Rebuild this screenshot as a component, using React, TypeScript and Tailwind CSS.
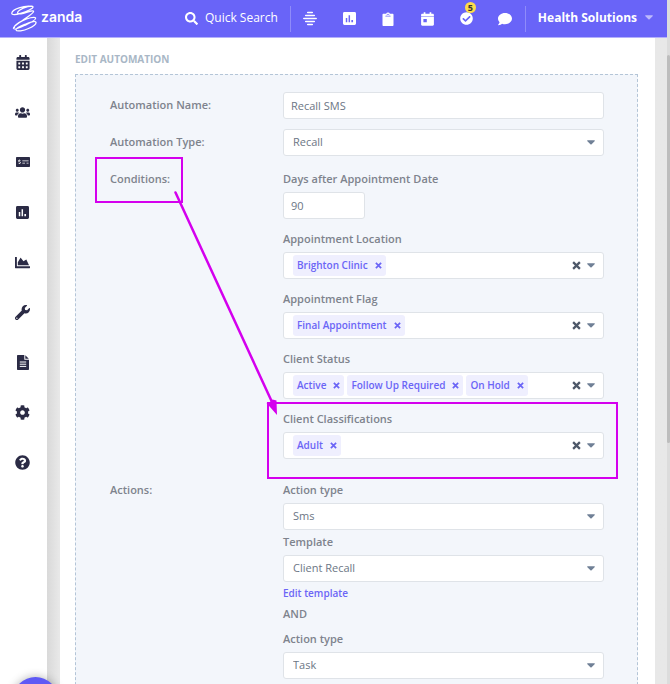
import React from "react";
import {
  FaSearch,
  FaCalendarAlt,
  FaUsers,
  FaMoneyCheckAlt,
  FaChartArea,
  FaWrench,
  FaCog,
  FaQuestionCircle,
  FaCheckCircle,
  FaComment,
} from "react-icons/fa";

function ChartBox({ className }: { className: string }) {
  return (
    <svg viewBox="0 0 14 14" className={className} fill="currentColor" aria-hidden="true">
      <path
        fillRule="evenodd"
        d="M1.5 0h11A1.5 1.5 0 0 1 14 1.5v11a1.5 1.5 0 0 1-1.500 1.500h-11A1.500 1.500 0 0 1 0 12.500v-11A1.500 1.500 0 0 1 1.500 0ZM3 6.500V11h1.600V6.500ZM6 3.500V11h1.600V3.500ZM9 8.500V11h1.800V8.500Z"
      />
    </svg>
  );
}

function LinesIcon() {
  return (
    <svg viewBox="0 0 14 15" className="h-[15px] w-[14px]" stroke="currentColor" strokeWidth="1.500" strokeLinecap="round" aria-hidden="true">
      <path d="M4.700 1.500h4.600M2.700 4.500h8.600M.8 7.500h12.400M2.700 10.500h8.600M4.700 13.500h4.600" />
    </svg>
  );
}

function ClipboardIcon() {
  return (
    <svg viewBox="0 0 12 14" className="h-[14px] w-[12px]" aria-hidden="true">
      <path
        fill="currentColor"
        d="M1.500 1.800h2.600a2 2 0 0 1 3.800 0h2.600c.6 0 1 .4 1 1v10.100c0 .6-.4 1-1 1h-9c-.6 0-1-.4-1-1V2.800c0-.6.4-1 1-1Z"
      />
      <path d="M3.400 4.200h5.200M4.600 3l1.400-.9L7.400 3" stroke="#6964f8" strokeWidth=".7" fill="none" />
    </svg>
  );
}

function DayIcon() {
  return (
    <svg viewBox="0 0 13 14" className="h-[14px] w-[13px]" aria-hidden="true">
      <path
        fill="currentColor"
        fillRule="evenodd"
        d="M2.700.3h1.700v1.500h4.200V.3h1.700v1.500h1.400c.7 0 1.200.5 1.200 1.100v1.500H.1V2.900c0-.6.5-1.100 1.200-1.100h1.400ZM.1 5.100h12.800v7.500c0 .6-.5 1.100-1.200 1.100H1.300c-.7 0-1.200-.5-1.200-1.100ZM2.400 7v3.200h3.400V7Z"
      />
    </svg>
  );
}

function FileIcon() {
  return (
    <svg viewBox="0 0 12 15" className="h-[15px] w-[12px]" aria-hidden="true">
      <path fill="currentColor" d="M1 0h6.300v4.700H12V14c0 .6-.4 1-1 1H1c-.6 0-1-.4-1-1V1c0-.6.400-1 1-1Zm7.300.200L11.800 3.700H8.300Z" />
      <path d="M2.800 7h6.400M2.800 9.200h6.400M2.800 11.400h6.400" stroke="#fff" strokeWidth="1" />
    </svg>
  );
}

function Logo() {
  return (
    <svg viewBox="0 0 26 27" className="h-[27px] w-[26px]" fill="none" stroke="#fff" strokeWidth="1.250" strokeLinecap="round" strokeLinejoin="round" aria-hidden="true">
      <path d="M20.500 1.300C13 .3 1.500 4.300.8 8c-.4 2.500 4.500 1.700 8.700.4C15.500 6.500 22.800 3.300 22 1.700 21.300.3 13 2 8.500 5.200c-3.500 2.500-1.500 4 1.500 3.600 4.500-.5 12-4.300 12.600-2.500.6 1.900-7 6.200-11.400 9.400C7 18.700 1.500 22 2.500 23.500c1 1.400 6.500-.8 11-3 4.800-2.300 11.800-5.500 11.100-7.400-.8-2-8.300.2-13 2.500C7.600 17.600 2.700 20.500 3.500 22.500M5 24.800c.4 2.200 8 .8 12.500-1.300 3.700-1.700 8-4.200 7.500-6.200-.6-2-6.500.2-10.300 1.700C10.400 20.700 4.600 22.800 5 24.800Z" />
    </svg>
  );
}

function Caret({ className }: { className: string }) {
  return (
    <svg viewBox="0 0 8 5" className={className} fill="currentColor" aria-hidden="true">
      <path d="M.8.300h6.400c.600 0 .800.600.400 1L4.600 4.300c-.3.300-.9.300-1.200 0L.4 1.300C0 .9.200.3.800.3Z" />
    </svg>
  );
}

function Cross({ className }: { className: string }) {
  return (
    <svg viewBox="0 0 8 8" className={className} stroke="currentColor" aria-hidden="true">
      <path d="M1 1l6 6M7 1L1 7" strokeWidth="2" />
    </svg>
  );
}

const controlBox = "h-[27px] w-full rounded-[3px] border border-[#dfe3e8] bg-white text-[#6c7685]";

function SelectBox({ id, value }: { id: string; value: string }) {
  return (
    <div className="relative">
      <select id={id} defaultValue={value} className={`${controlBox} block appearance-none pr-6 pb-[2px] pl-[9px] text-[11px]`}>
        <option>{value}</option>
      </select>
      <Caret className="pointer-events-none absolute top-[11px] right-[9px] h-[5px] w-2 text-[#708096]" />
    </div>
  );
}

function Field({ id, label, children }: { id: string; label: string; children: React.ReactNode }) {
  return (
    <div>
      <label htmlFor={id} className="mb-[3px] block font-semibold">
        {label}
      </label>
      {children}
    </div>
  );
}

function TagField({ id, label, tags }: { id: string; label: string; tags: string[] }) {
  return (
    <div role="group" aria-labelledby={id}>
      <div id={id} className="mb-[3px] font-semibold">
        {label}
      </div>
      <div className={`${controlBox} flex items-center pr-2 pb-px pl-[9px]`}>
        <div className="flex flex-1 gap-[3px]">
          {tags.map((tag) => (
            <span key={tag} className="flex h-[21px] items-center gap-[7px] rounded-[3px] bg-[#efeffe] px-1 text-[10px] font-semibold text-[#6b65f6]">
              {tag}
              <button type="button" aria-label={`Remove ${tag}`}>
                <Cross className="h-[7px] w-[7px]" />
              </button>
            </span>
          ))}
        </div>
        <button type="button" aria-label={`Clear ${label}`} className="mr-[6px] text-[#4d5868]">
          <Cross className="h-[9px] w-[9px]" />
        </button>
        <button type="button" aria-label={`Open ${label}`} className="text-[#708096]">
          <Caret className="h-[5px] w-2" />
        </button>
      </div>
    </div>
  );
}

const sideItems = [
  { name: "Calendar", icon: <FaCalendarAlt className="h-[15px] w-[14px]" /> },
  { name: "Clients", icon: <FaUsers className="h-[15px] w-[15px]" /> },
  { name: "Payments", icon: <FaMoneyCheckAlt className="h-[14px] w-[14px]" /> },
  { name: "Reports", icon: <ChartBox className="h-[13px] w-[13px]" /> },
  { name: "Analytics", icon: <FaChartArea className="h-[15px] w-[15px]" /> },
  { name: "Tools", icon: <FaWrench className="h-[15px] w-[15px]" /> },
  { name: "Documents", icon: <FileIcon /> },
  { name: "Settings", icon: <FaCog className="h-[15px] w-[15px]" /> },
  { name: "Help", icon: <FaQuestionCircle className="h-[15px] w-[15px]" /> },
];

const topItems = [
  { name: "Waitlist", icon: <LinesIcon /> },
  { name: "Reports", icon: <ChartBox className="h-[13px] w-[13px]" /> },
  { name: "Notes", icon: <ClipboardIcon /> },
  { name: "Day", icon: <DayIcon /> },
  { name: "Tasks", icon: <FaCheckCircle className="h-[13px] w-[13px]" />, badge: 5 },
  { name: "Messages", icon: <FaComment className="h-[14px] w-[14px]" /> },
];

function Header() {
  return (
    <header className="flex h-[38px] shrink-0 items-center border-b border-[#b3b0fb] bg-[#6964f8] text-white">
      <a href="#home" className="ml-[11px] flex items-center gap-1 pb-px">
        <Logo />
        <span className="pb-[2px] font-['Inter',sans-serif] text-[14px] leading-5 font-semibold">zanda</span>
      </a>
      <button type="button" className="ml-auto flex items-center gap-[7px] pb-px text-[12px]">
        <FaSearch className="h-[13px] w-[13px]" />
        Quick Search
      </button>
      <div className="ml-3 h-[26px] w-px bg-[#8f8bfa]" />
      <nav className="flex">
        {topItems.map((item) => (
          <button key={item.name} type="button" aria-label={item.name} className="relative flex h-[30px] w-[39px] items-center justify-center">
            {item.icon}
            {item.badge && (
              <span className="absolute top-[-2px] right-[10px] flex h-[11px] w-[11px] items-center justify-center rounded-full bg-[#fddc4b] text-[9px] leading-none font-bold text-[#333]">
                {item.badge}
              </span>
            )}
          </button>
        ))}
      </nav>
      <div className="h-[26px] w-px bg-[#8f8bfa]" />
      <button type="button" className="mr-[14px] ml-3 flex items-center gap-2 pb-[2px] text-[12px] font-bold">
        Health Solutions
        <Caret className="h-[5px] w-2 text-[#bcb9fc]" />
      </button>
    </header>
  );
}

export default function App() {
  return (
    <div className="flex h-screen overflow-hidden bg-white font-['Open_Sans','Noto_Sans',sans-serif]">
      <div className="relative flex min-w-0 flex-1 flex-col">
        <Header />
        <div className="flex min-h-0 flex-1">
          <aside className="w-[47px] shrink-0 bg-white">
            <nav className="-mt-px flex flex-col">
              {sideItems.map((item) => (
                <a key={item.name} href="#menu" aria-label={item.name} className="flex h-[50px] items-center justify-center pr-[2px] text-[#2b2b45]">
                  {item.icon}
                </a>
              ))}
            </nav>
          </aside>
          <main className="flex min-w-0 flex-1 bg-[#e8e8e8] bg-linear-to-r from-[#d9d9d9] to-[#e8e8e8] to-[12px] pr-3 pl-[13px]">
            <div className="w-full shrink-0 self-start bg-white pt-[11px] pr-[17px] pl-[15px]">
              <h1 className="mb-[5px] text-[10px] leading-5 font-bold text-[#a9b7c6]">EDIT AUTOMATION</h1>
              <form className="relative border border-dashed border-[#b4c5d7] bg-[#f3f6fb] pt-[17px] pr-[33px] pb-10 pl-[34px]">
                <div className="grid grid-cols-[173px_1fr] text-[11px] leading-5 text-[#7e838d]">
                  <label htmlFor="name" className="pt-[3px] font-semibold">Automation Name:</label>
                  <input id="name" defaultValue="Recall SMS" className={`${controlBox} mb-[10px] px-[7px] text-[11px]`} />

                  <label htmlFor="type" className="pt-[3px] font-semibold">Automation Type:</label>
                  <SelectBox id="type" value="Recall" />

                  <div className="mt-[13px] font-semibold">Conditions:</div>
                  <div className="mt-[13px] flex flex-col gap-[10px]">
                    <Field id="days" label="Days after Appointment Date">
                      <input id="days" defaultValue="90" className="block h-[27px] w-[82px] rounded-[3px] border border-[#dfe3e8] bg-white px-[7px] text-[11px] text-[#6c7685]" />
                    </Field>
                    <TagField id="location" label="Appointment Location" tags={["Brighton Clinic"]} />
                    <TagField id="flag" label="Appointment Flag" tags={["Final Appointment"]} />
                    <TagField id="status" label="Client Status" tags={["Active", "Follow Up Required", "On Hold"]} />
                    <TagField id="classes" label="Client Classifications" tags={["Adult"]} />
                  </div>

                  <div className="mt-[21px] font-semibold">Actions:</div>
                  <div className="mt-[21px] flex flex-col">
                    <Field id="action1" label="Action type">
                      <SelectBox id="action1" value="Sms" />
                    </Field>
                    <div className="mt-[2px]">
                      <Field id="template" label="Template">
                        <SelectBox id="template" value="Client Recall" />
                      </Field>
                    </div>
                    <a href="#template" className="mt-[3px] self-start text-[10px] leading-4 font-semibold text-[#6b65f6]">Edit template</a>
                    <div className="mt-[3px] mb-[5px] font-semibold">AND</div>
                    <Field id="action2" label="Action type">
                      <SelectBox id="action2" value="Task" />
                    </Field>
                  </div>
                </div>
                <div className="pointer-events-none absolute top-[82px] left-[19px] h-[46px] w-[88px] border-2 border-[#d400ee]" />
                <div className="pointer-events-none absolute top-[327px] right-[19px] left-[191px] h-[77px] border-2 border-[#d400ee]" />
                <svg viewBox="0 0 104 225" className="pointer-events-none absolute top-[116px] left-[98px] h-[225px] w-[104px]" fill="none" aria-hidden="true">
                  <path d="M1.500 1.500L98 211" stroke="#d400ee" strokeWidth="2.500" strokeLinecap="round" />
                  <path d="M103 224L92.500 212L96 211L98.500 208.500L102.500 209.500Z" fill="#d400ee" />
                </svg>
              </form>
            </div>
          </main>
        </div>
        <button type="button" aria-label="Open chat" className="absolute -bottom-[38px] left-[13px] h-[45px] w-[45px] rounded-full bg-[#5f5af5] shadow-[0_0_10px_rgba(0,0,0,0.3)]" />
      </div>
      <div className="w-[3px] shrink-0 bg-[#dcdcdc] pt-[55px]">
        <div className="h-[388px] rounded-full bg-[#bdbdbd]" />
      </div>
    </div>
  );
}
